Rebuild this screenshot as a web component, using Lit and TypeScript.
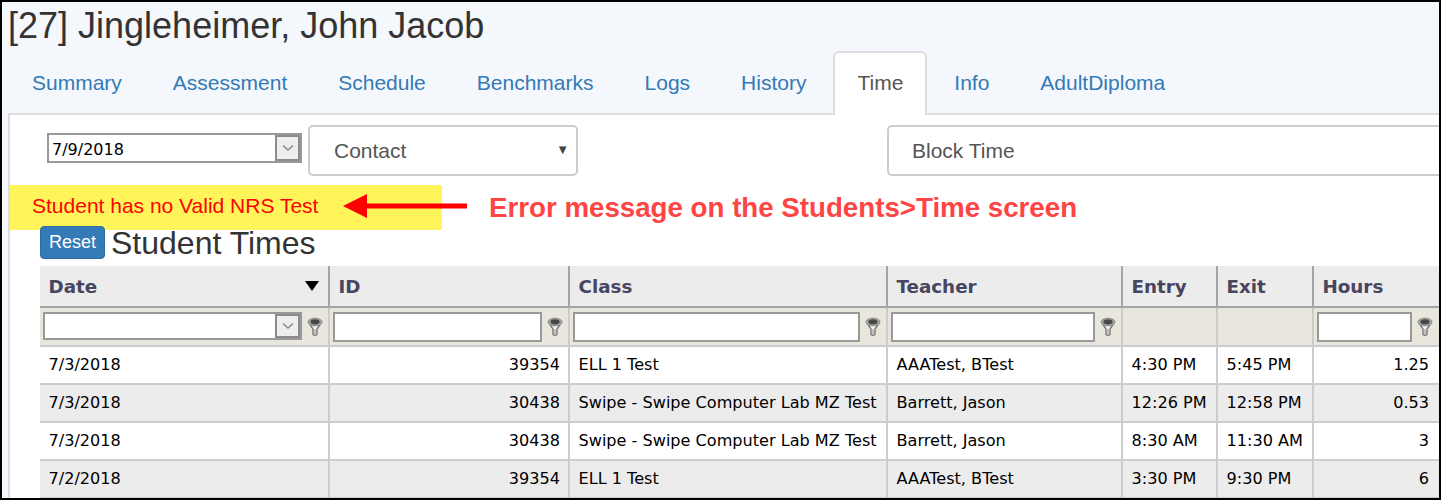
import { LitElement, html, css, svg } from "lit";
import { customElement } from "lit/decorators.js";

const TABS = ["Summary", "Assessment", "Schedule", "Benchmarks", "Logs", "History", "Time", "Info", "AdultDiploma"];

const ROWS = [
  ["7/3/2018", "39354", "ELL 1 Test", "AAATest, BTest", "4:30 PM", "5:45 PM", "1.25"],
  ["7/3/2018", "30438", "Swipe - Swipe Computer Lab MZ Test", "Barrett, Jason", "12:26 PM", "12:58 PM", "0.53"],
  ["7/3/2018", "30438", "Swipe - Swipe Computer Lab MZ Test", "Barrett, Jason", "8:30 AM", "11:30 AM", "3"],
  ["7/2/2018", "39354", "ELL 1 Test", "AAATest, BTest", "3:30 PM", "9:30 PM", "6"],
];

const funnel = svg`<svg class="funnel" width="16" height="20" viewBox="0 0 16 20">
  <path d="M2 6 L6 12 V17.5 Q8 19 10 17.5 V12 L14 6" fill="#f2f2f2" stroke="#777" stroke-width="1.4"/>
  <ellipse cx="8" cy="5" rx="7" ry="3.8" fill="#a8a8a8" stroke="#8a8a8a" stroke-width="1"/>
  <ellipse cx="8" cy="4.8" rx="4.6" ry="2.6" fill="#484848"/>
  <path d="M8 12 V17" stroke="#b0b0b0" stroke-width="1.5"/>
</svg>`;

const chevron = svg`<svg width="14" height="8" viewBox="0 0 14 8"><path d="M2 1.5 L7 6 L12 1.5" fill="none" stroke="#888" stroke-width="1.6"/></svg>`;

@customElement("app-root")
export class AppRoot extends LitElement {
  static styles = css`
    :host {
      display: block;
      width: 1441px;
      height: 500px;
      box-sizing: border-box;
      border: 2px solid #000;
      overflow: hidden;
      background: #f4f7fb;
      font-family: "Liberation Sans", Arial, sans-serif;
    }
    h1 {
      margin: 0;
      padding: 4px 0 0 6px;
      height: 49px;
      box-sizing: border-box;
      font-size: 36px;
      line-height: 40px;
      font-weight: 400;
      color: #333;
    }
    .tabs {
      display: flex;
      height: 62px;
      padding-left: 6px;
    }
    .tab {
      padding: 0 22px;
      margin-right: 3px;
      font-size: 21px;
      line-height: 60px;
      color: #337ab7;
      border: 2px solid transparent;
      border-bottom: 0;
    }
    .tab.active {
      color: #555;
      background: #fff;
      border-color: #ddd;
      border-radius: 6px 6px 0 0;
      margin-bottom: -2px;
      position: relative;
      z-index: 1;
    }
    .panel {
      margin-left: 6px;
      height: 400px;
      background: #fff;
      border-top: 2px solid #ddd;
      border-left: 2px solid #ddd;
    }
    .controls {
      display: flex;
      align-items: flex-start;
      height: 70px;
      padding: 10px 0 0 37px;
      box-sizing: border-box;
    }
    .combo {
      display: flex;
      box-sizing: border-box;
      background: #fff;
      border: 2px solid #999;
      font: 16px "DejaVu Sans", sans-serif;
      color: #000;
    }
    .combo span {
      flex: 1;
      padding-left: 3px;
      line-height: 29px;
    }
    .combo i {
      width: 25px;
      display: flex;
      align-items: center;
      justify-content: center;
      background: #eee;
      border: 2px solid #8c8c8c;
      box-sizing: border-box;
    }
    .date-combo {
      width: 255px;
      height: 30px;
      margin-top: 8px;
      margin-right: 6px;
    }
    .select {
      box-sizing: border-box;
      height: 51px;
      padding-left: 23px;
      border: 2px solid #ccc;
      border-radius: 5px;
      font-size: 21px;
      line-height: 47px;
      color: #555;
      background: #fff;
      display: flex;
      justify-content: space-between;
    }
    .contact {
      width: 270px;
      margin-right: 309px;
      padding-left: 24px;
      padding-right: 7px;
    }
    .block {
      flex: 1;
      border-right: 0;
      border-radius: 5px 0 0 5px;
    }
    .caret {
      font-size: 13px;
      line-height: 45px;
      color: #444;
    }
    .banner {
      display: flex;
      align-items: center;
      height: 45px;
    }
    .alert {
      width: 432px;
      height: 45px;
      box-sizing: border-box;
      padding-left: 22px;
      background: #fff55a;
      color: #f00;
      font-size: 21px;
      line-height: 42px;
    }
    .arrow {
      margin-left: -99px;
      margin-top: -3px;
      position: relative;
    }
    .note {
      margin-left: 21px;
      font-size: 27.7px;
      font-weight: 700;
      color: #f44;
    }
    .content {
      padding-left: 30px;
    }
    .heading {
      display: flex;
      align-items: flex-start;
      gap: 6px;
      height: 40px;
      margin-top: -4px;
      position: relative;
    }
    .reset {
      width: 65px;
      height: 33px;
      box-sizing: border-box;
      background: #337ab7;
      border: 1px solid #2e6da4;
      border-radius: 4px;
      color: #fff;
      font: 18px/26px "Liberation Sans", Arial, sans-serif;
      text-align: center;
      padding: 0 0 1px;
    }
    .heading h2 {
      margin: 0;
      font-size: 32px;
      line-height: 34px;
      font-weight: 400;
      color: #333;
    }
    .grid {
      font-family: "DejaVu Sans", sans-serif;
      font-size: 16.1px;
    }
    .row {
      display: grid;
      grid-template-columns: 290px 240px 318px 235px 95px 96px minmax(0, 1fr);
    }
    .head {
      height: 42px;
      background: #ececec;
      border-bottom: 2px solid #a5a5a5;
      box-sizing: border-box;
      color: #474560;
      font-weight: 700;
      font-size: 18.3px;
      line-height: 42px;
    }
    .head > div {
      border-right: 2px solid #a5a5a5;
      padding: 0 9px 0 8.5px;
      display: flex;
      justify-content: space-between;
    }
    .head > div:last-child,
    .filters > div:last-child,
    .data > div:last-child {
      border-right: 0;
    }
    .sort {
      width: 0;
      height: 0;
      margin-top: 15px;
      border-left: 7px solid transparent;
      border-right: 7px solid transparent;
      border-top: 10px solid #000;
    }
    .filters {
      height: 39px;
      background: #e9e7dd;
      border-bottom: 2px solid #ccc;
      box-sizing: border-box;
    }
    .filters > div {
      border-right: 2px solid #ccc;
      display: flex;
      align-items: center;
      gap: 5px;
      padding: 0 5px 0 3px;
    }
    .filters > div:last-child {
      padding-right: 6px;
    }
    .filters input {
      flex: 1;
      min-width: 0;
      height: 30px;
      box-sizing: border-box;
      border: 2px solid #999;
      background: #fff;
      padding: 0;
    }
    .filters .combo {
      flex: 1;
      height: 28px;
      margin-bottom: 2px;
    }
    .funnel {
      flex: none;
    }
    .data {
      height: 38px;
      box-sizing: border-box;
      border-bottom: 2px solid #ccc;
      color: #000;
      background: #fff;
      line-height: 36px;
    }
    .data.alt {
      background: #ececec;
    }
    .data > div {
      border-right: 2px solid #ccc;
      padding: 0 8px 0 8.5px;
      white-space: nowrap;
      overflow: hidden;
    }
    .data > div:last-child {
      padding-right: 10px;
    }
    .data .num {
      text-align: right;
    }
  `;

  render() {
    return html`
      <h1>[27] Jingleheimer, John Jacob</h1>
      <nav class="tabs">
        ${TABS.map((t) => html`<div class="tab ${t === "Time" ? "active" : ""}">${t}</div>`)}
      </nav>
      <div class="panel">
        <div class="controls">
          <div class="combo date-combo"><span>7/9/2018</span><i>${chevron}</i></div>
          <div class="select contact">Contact<span class="caret">▼</span></div>
          <div class="select block">Block Time</div>
        </div>
        <div class="banner">
          <div class="alert">Student has no Valid NRS Test</div>
          <svg class="arrow" width="125" height="26" viewBox="0 0 125 26">
            <path d="M0 13 L24 1 V10.5 H124 V15.5 H24 V25 Z" fill="#f00"/>
          </svg>
          <div class="note">Error message on the Students&gt;Time screen</div>
        </div>
        <div class="content">
          <div class="heading">
            <button class="reset">Reset</button>
            <h2>Student Times</h2>
          </div>
          <div class="grid">
            <div class="row head">
              <div>Date<span class="sort"></span></div>
              <div>ID</div>
              <div>Class</div>
              <div>Teacher</div>
              <div>Entry</div>
              <div>Exit</div>
              <div>Hours</div>
            </div>
            <div class="row filters">
              <div><div class="combo"><span></span><i>${chevron}</i></div>${funnel}</div>
              <div><input />${funnel}</div>
              <div><input />${funnel}</div>
              <div><input />${funnel}</div>
              <div></div>
              <div></div>
              <div><input />${funnel}</div>
            </div>
            ${ROWS.map(
              (r, i) => html`<div class="row data ${i % 2 ? "alt" : ""}">
                ${r.map((c, j) => html`<div class="${j === 1 || j === 6 ? "num" : ""}">${c}</div>`)}
              </div>`
            )}
          </div>
        </div>
      </div>
    `;
  }
}
